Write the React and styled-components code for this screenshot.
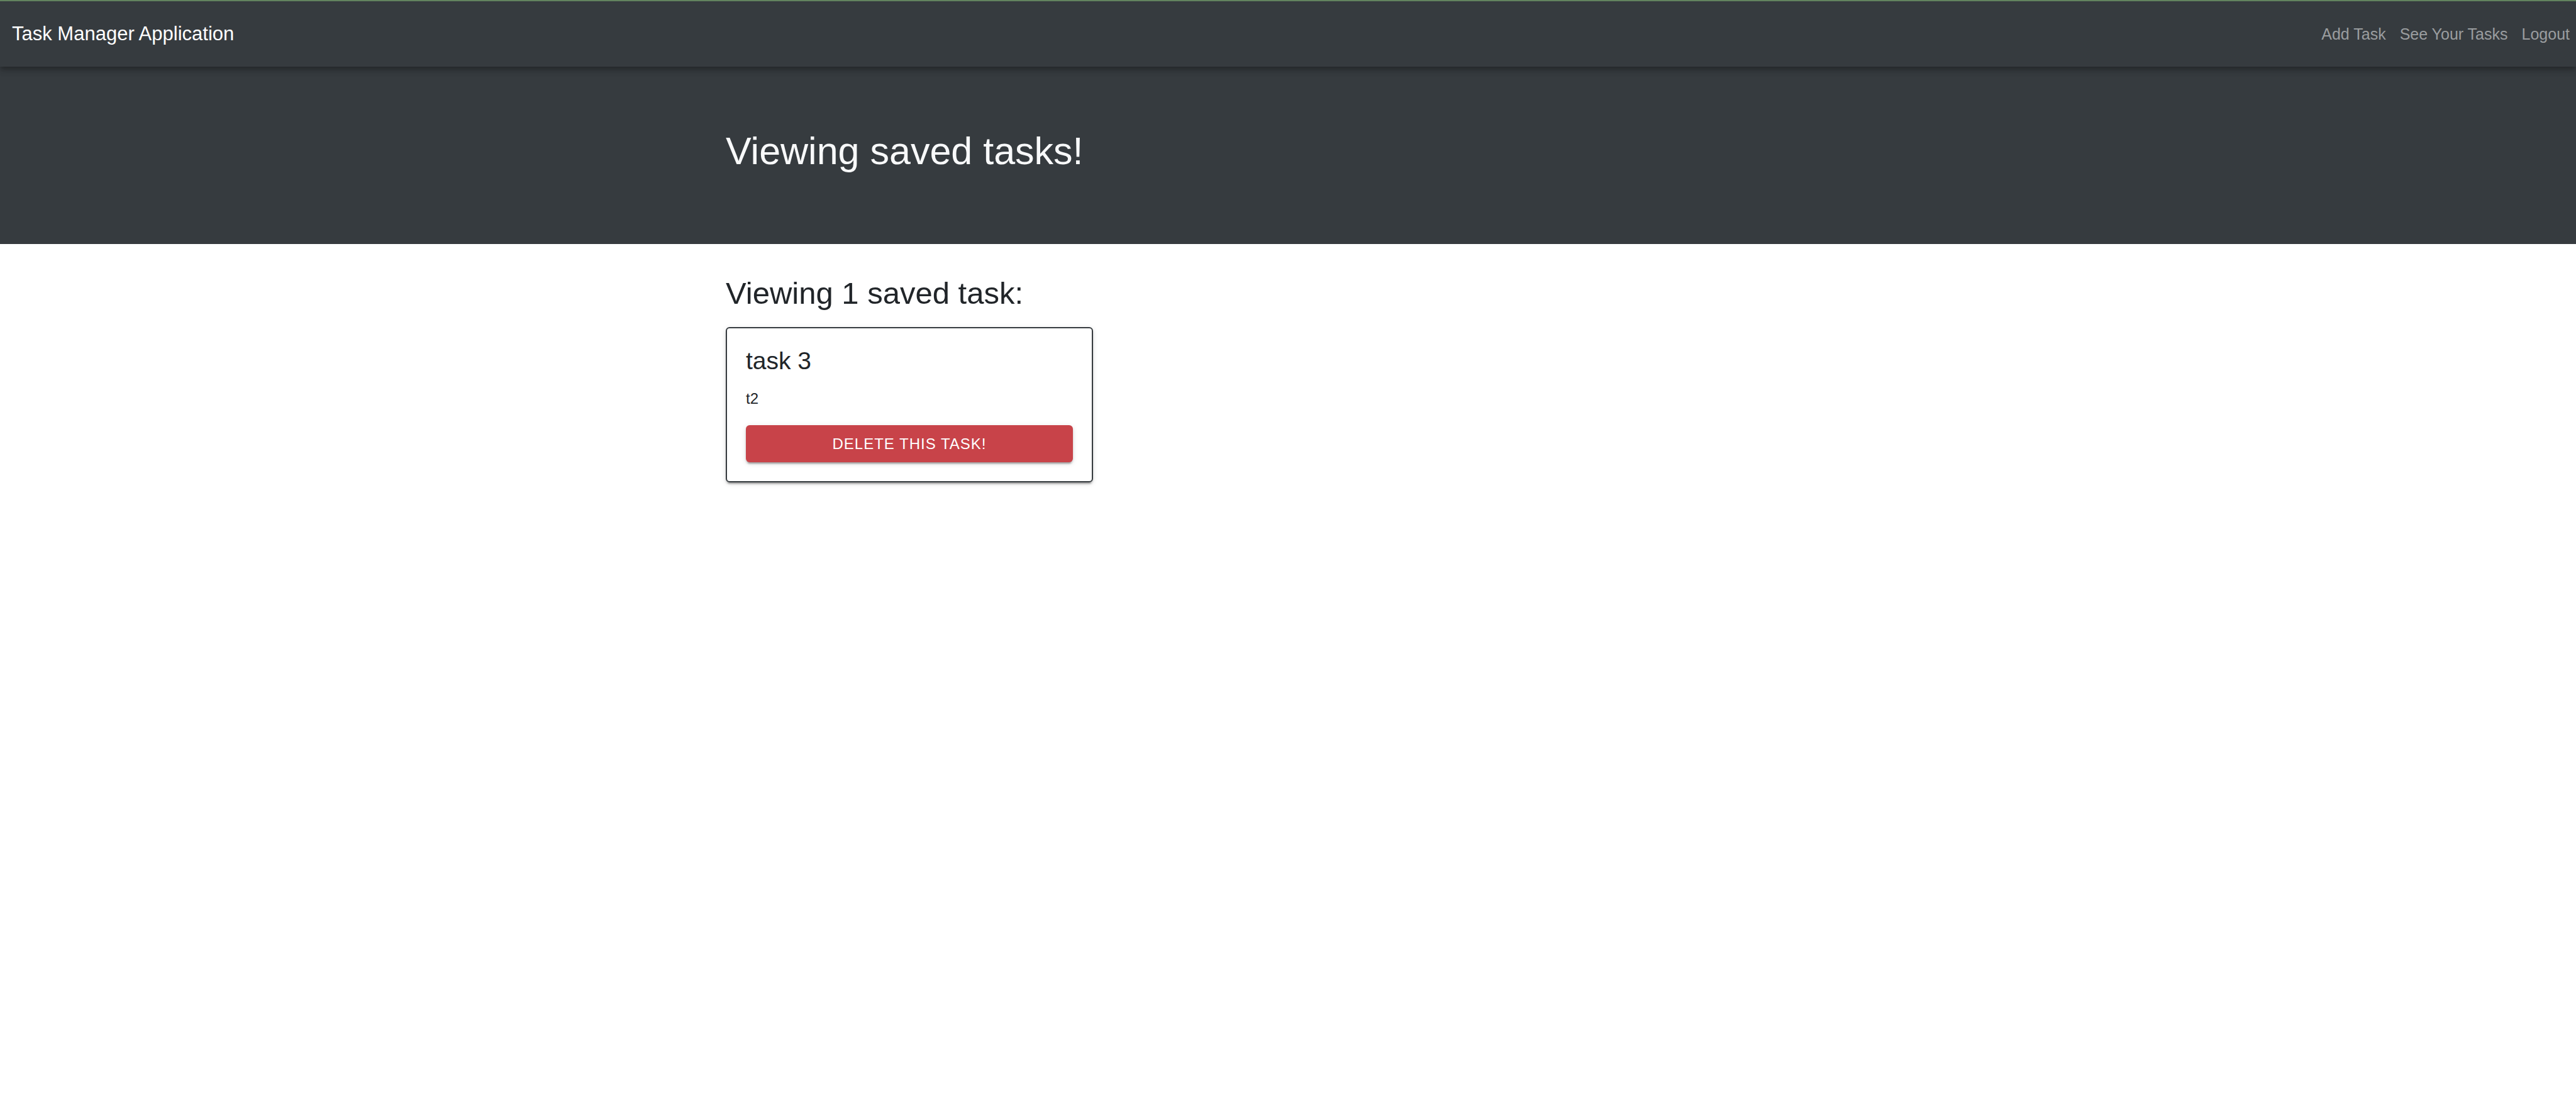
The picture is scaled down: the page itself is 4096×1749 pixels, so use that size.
import React from "react";
import styled, { createGlobalStyle } from "styled-components";

const GlobalStyle = createGlobalStyle`
  *, *::before, *::after { box-sizing: border-box; }
  body {
    margin: 0;
    background: #fff;
    color: #212529;
    font-family: "Liberation Sans", Arial, sans-serif;
    font-size: 24px;
    line-height: 36px;
  }
  h1, h2, h3, p { margin: 0; font-weight: 400; }
`;

const raisedShadow = `
  0 5px 2px -3px rgba(0, 0, 0, 0.2),
  0 3px 3px rgba(0, 0, 0, 0.14),
  0 2px 8px rgba(0, 0, 0, 0.12)
`;

const NavBar = styled.nav`
  position: relative;
  display: flex;
  align-items: center;
  justify-content: space-between;
  height: 106px;
  padding: 0 10px 0 19px;
  border-top: 2px solid #62835f;
  background: #363b3f;
  box-shadow:
    0 3px 6px -2px rgba(0, 0, 0, 0.2),
    0 7px 8px rgba(0, 0, 0, 0.14),
    0 2px 16px rgba(0, 0, 0, 0.12);
`;

const Brand = styled.a`
  color: #fff;
  font-size: 31px;
  line-height: 46px;
  text-decoration: none;
`;

const NavLinks = styled.div`
  display: flex;
  gap: 22px;
`;

const NavLink = styled.a`
  color: #9a9d9f;
  font-size: 25px;
  text-decoration: none;
`;

const Hero = styled.header`
  padding: 96px 0 110px;
  background: #363b3f;
  color: #f8f9fa;
`;

const Container = styled.div`
  width: 100%;
  max-width: 1788px;
  margin: 0 auto;
`;

const HeroTitle = styled.h1`
  font-size: 61px;
  line-height: 76px;
`;

const Main = styled.main`
  padding: 48px 0;
`;

const SectionTitle = styled.h2`
  margin-bottom: 24px;
  font-size: 49px;
  line-height: 60px;
`;

const TaskGrid = styled.div`
  display: grid;
  grid-template-columns: repeat(3, 1fr);
  gap: 18px;
`;

const Card = styled.article`
  padding: 30px;
  border: 2px solid #363b3f;
  border-radius: 6px;
  box-shadow: ${raisedShadow};
`;

const CardTitle = styled.h3`
  margin-bottom: 20px;
  font-size: 39px;
  line-height: 44px;
`;

const CardText = styled.p`
  margin-bottom: 24px;
`;

const DeleteButton = styled.button`
  display: block;
  width: 100%;
  height: 59px;
  padding: 0 24px;
  border: 0;
  border-radius: 6px;
  background: #c84349;
  color: #fff;
  font: inherit;
  letter-spacing: 1px;
  text-transform: uppercase;
  box-shadow: ${raisedShadow};
  cursor: pointer;
`;

const links = ["Add Task", "See Your Tasks", "Logout"];
const tasks = [{ title: "task 3", text: "t2" }];

export default function App() {
  return (
    <>
      <GlobalStyle />
      <NavBar>
        <Brand href="#">Task Manager Application</Brand>
        <NavLinks>
          {links.map((label) => (
            <NavLink key={label} href="#">{label}</NavLink>
          ))}
        </NavLinks>
      </NavBar>
      <Hero>
        <Container>
          <HeroTitle>Viewing saved tasks!</HeroTitle>
        </Container>
      </Hero>
      <Main>
        <Container>
          <SectionTitle>Viewing {tasks.length} saved task:</SectionTitle>
          <TaskGrid>
            {tasks.map((task) => (
              <Card key={task.title}>
                <CardTitle>{task.title}</CardTitle>
                <CardText>{task.text}</CardText>
                <DeleteButton type="button">Delete this task!</DeleteButton>
              </Card>
            ))}
          </TaskGrid>
        </Container>
      </Main>
    </>
  );
}
